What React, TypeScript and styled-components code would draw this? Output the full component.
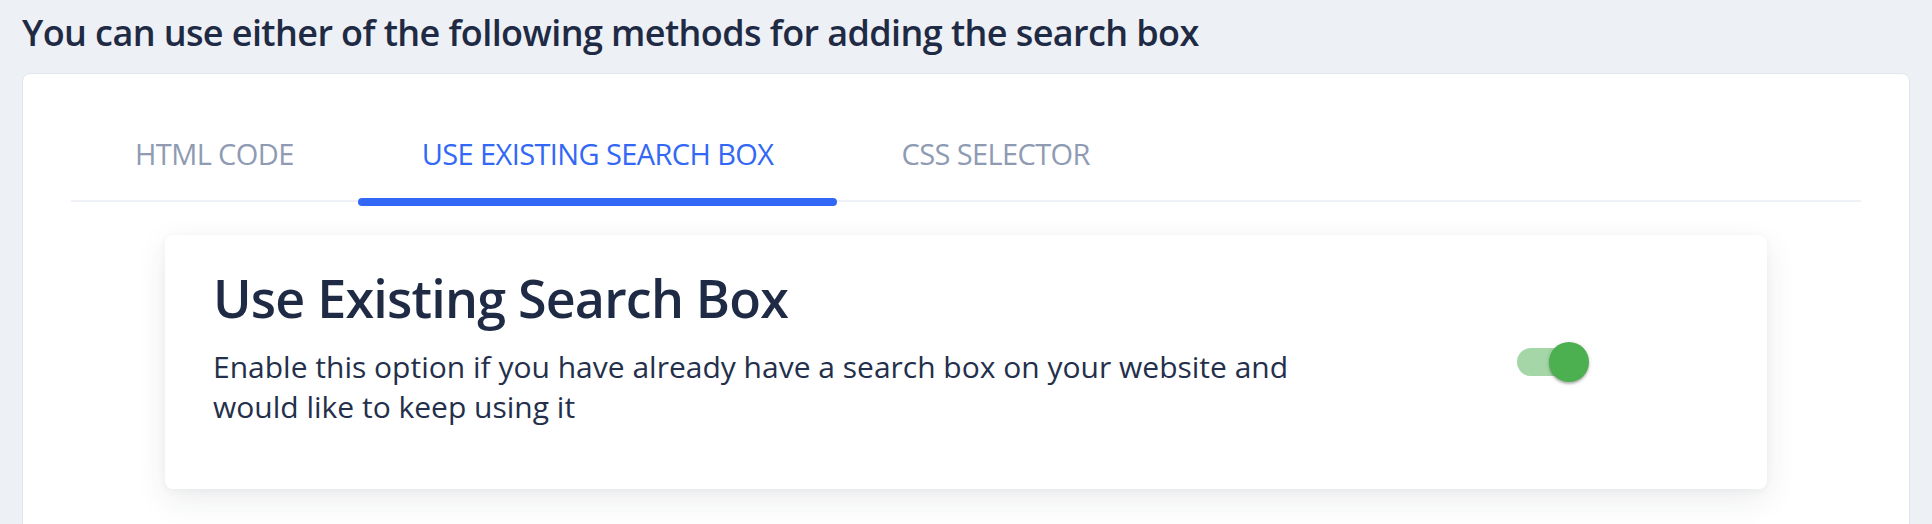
import React, { useState } from "react";
import styled, { createGlobalStyle } from "styled-components";

const GlobalStyle = createGlobalStyle`
  html, body {
    margin: 0;
    padding: 0;
    background: #edf0f5;
    font-family: "Open Sans", "Noto Sans", Arial, sans-serif;
    color: #1f2a44;
  }
  * { box-sizing: border-box; }
`;

const Page = styled.div`
  padding: 0 22px;
  height: 524px;
  overflow: hidden;
`;

const Heading = styled.h1`
  margin: 0;
  padding-top: 9px;
  font-size: 36px;
  line-height: 48px;
  font-weight: 600;
  color: #1f2a44;
  letter-spacing: -0.6px;
`;

const Card = styled.section`
  margin-top: 16px;
  background: #ffffff;
  border: 1px solid #e1e6ee;
  border-radius: 8px;
  padding: 30px 48px 60px;
`;

const TabList = styled.div`
  display: flex;
  border-bottom: 2px solid #eef1f5;
`;

const Tab = styled.button<{ $active?: boolean }>`
  position: relative;
  appearance: none;
  border: 0;
  background: transparent;
  padding: 32px 64px 28px;
  margin: 0;
  font-family: "Open Sans", "Noto Sans", Arial, sans-serif;
  font-size: 29px;
  line-height: 36px;
  font-weight: 500;
  letter-spacing: -0.6px;
  text-transform: uppercase;
  color: ${(p) => (p.$active ? "#3368f6" : "#8e9bb3")};
  cursor: pointer;
`;

const Indicator = styled.span`
  position: absolute;
  left: 0;
  right: 0;
  bottom: -6px;
  height: 8px;
  border-radius: 4px;
  background: #3368f6;
`;

const Panel = styled.div`
  margin: 33px 94px 0;
  background: #ffffff;
  border-radius: 8px;
  box-shadow: 0 10px 32px rgba(30, 40, 60, 0.09), 0 2px 8px rgba(30, 40, 60, 0.04);
  padding: 32px 48px;
  display: flex;
  align-items: flex-start;
`;

const TextBlock = styled.div`
  flex: 0 0 1129px;
  margin-bottom: 30px;
`;

const Title = styled.h2`
  margin: 0 0 18px;
  font-size: 52px;
  line-height: 62px;
  font-weight: 600;
  color: #1f2a44;
  letter-spacing: -0.8px;
`;

const Description = styled.p`
  margin: 0;
  font-size: 30px;
  line-height: 40px;
  font-weight: 400;
  color: #24304b;
`;

const ToggleCol = styled.div`
  flex: 1;
  align-self: center;
  display: flex;
  padding-left: 175px;
`;

const Switch = styled.button<{ $on: boolean }>`
  position: relative;
  appearance: none;
  border: 0;
  padding: 0;
  width: 68px;
  height: 28px;
  border-radius: 14px;
  background: ${(p) => (p.$on ? "#a5d6a7" : "#c4c9d1")};
  cursor: pointer;
`;

const Knob = styled.span<{ $on: boolean }>`
  position: absolute;
  top: -6px;
  left: ${(p) => (p.$on ? "32px" : "-4px")};
  width: 40px;
  height: 40px;
  border-radius: 50%;
  background: ${(p) => (p.$on ? "#4caf50" : "#fafafa")};
  box-shadow: 0 2px 2px rgba(0, 0, 0, 0.22), 0 1px 5px rgba(0, 0, 0, 0.14);
`;

const tabs = ["HTML Code", "Use Existing Search Box", "CSS Selector"];

export default function App() {
  const [active, setActive] = useState(1);
  const [on, setOn] = useState(true);
  return (
    <>
      <GlobalStyle />
      <Page>
        <Heading>You can use either of the following methods for adding the search box</Heading>
        <Card>
          <TabList>
            {tabs.map((t, i) => (
              <Tab key={t} $active={i === active} onClick={() => setActive(i)}>
                {t}
                {i === active && <Indicator />}
              </Tab>
            ))}
          </TabList>
          <Panel>
            <TextBlock>
              <Title>Use Existing Search Box</Title>
              <Description>
                Enable this option if you have already have a search box on your website and would like to keep using it
              </Description>
            </TextBlock>
            <ToggleCol>
              <Switch $on={on} onClick={() => setOn(!on)} aria-label="toggle">
                <Knob $on={on} />
              </Switch>
            </ToggleCol>
          </Panel>
        </Card>
      </Page>
    </>
  );
}
